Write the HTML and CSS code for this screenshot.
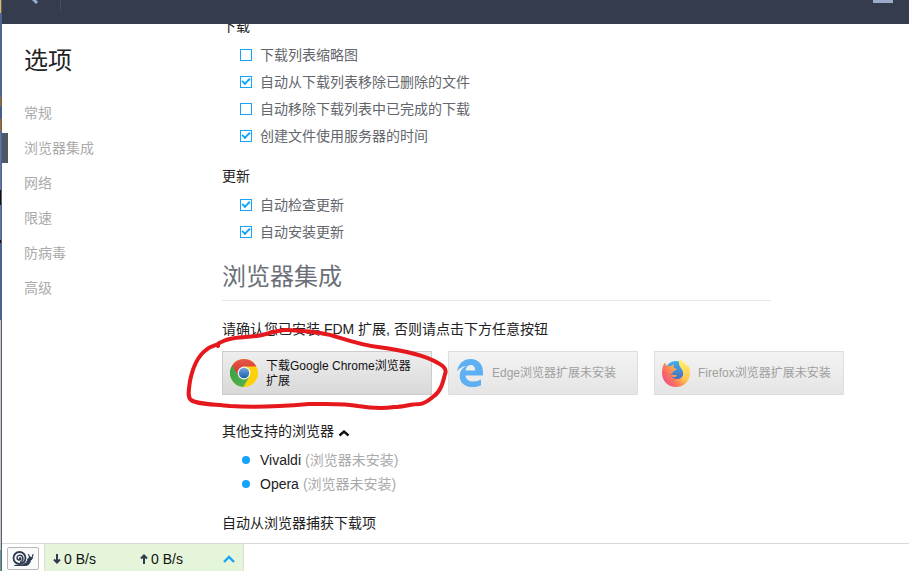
FILE: index.html
```html
<!DOCTYPE html>
<html lang="zh-CN">
<head>
<meta charset="utf-8">
<title>选项</title>
<link rel="stylesheet" href="styles.css">
</head>
<body>
<div class="desktop-edge"></div>
<div class="window">
  <header class="topbar">
    <button class="back" aria-label="返回"><svg width="12" height="8" viewBox="0 0 12 8"><path d="M1-5 5-1 9 3" fill="none" stroke="#9aaccb" stroke-width="3"/></svg></button>
    <button class="menu" aria-label="菜单"></button>
  </header>
  <div class="body">
    <aside class="sidebar">
      <h1>选项</h1>
      <nav>
        <a href="#general">常规</a>
        <a href="#browser" class="active">浏览器集成</a>
        <a href="#network">网络</a>
        <a href="#limits">限速</a>
        <a href="#antivirus">防病毒</a>
        <a href="#advanced">高级</a>
      </nav>
    </aside>
    <main class="content">
      <section class="group">
        <h3>下载</h3>
        <label class="option"><input type="checkbox">下载列表缩略图</label>
        <label class="option"><input type="checkbox" checked>自动从下载列表移除已删除的文件</label>
        <label class="option"><input type="checkbox">自动移除下载列表中已完成的下载</label>
        <label class="option"><input type="checkbox" checked>创建文件使用服务器的时间</label>
      </section>
      <section class="group">
        <h3>更新</h3>
        <label class="option"><input type="checkbox" checked>自动检查更新</label>
        <label class="option"><input type="checkbox" checked>自动安装更新</label>
      </section>
      <section id="browser">
        <h2>浏览器集成</h2>
        <p class="hint">请确认您已安装 FDM 扩展, 否则请点击下方任意按钮</p>
        <div class="browsers">
          <div class="marked">
            <button class="browser chrome">
              <svg width="28" height="28" viewBox="0 0 28 28">
                <defs>
                  <linearGradient id="cr" x2="0" y2="1"><stop stop-color="#e8584b"/><stop offset="1" stop-color="#c83228"/></linearGradient>
                  <linearGradient id="cg" x2="1" y2="1"><stop stop-color="#3a9d4a"/><stop offset="1" stop-color="#55b54c"/></linearGradient>
                  <linearGradient id="cb" x2="0" y2="1"><stop stop-color="#72a9dc"/><stop offset="1" stop-color="#1d5fa8"/></linearGradient>
                </defs>
                <circle cx="14" cy="14" r="14" fill="#fdd20a"/>
                <path d="M14 14 8.400 17.200 1.900 7A14 14 0 0 1 26.400 7.600H14Z" fill="url(#cr)"/>
                <path d="M2.300 6.300 8.400 17.200 14 20.500 19.600 17.200 13.300 28A14 14 0 0 1 2.300 6.300Z" fill="url(#cg)"/>
                <circle cx="14" cy="14" r="6.400" fill="#f4f5f6"/>
                <circle cx="14" cy="14" r="5.200" fill="url(#cb)"/>
              </svg>
              <span>下载Google Chrome浏览器扩展</span>
            </button>
            <svg class="marker" width="270" height="90" viewBox="182 324 270 90" aria-hidden="true">
              <path d="M218 346C217 343 221 342 226 340C238 336 250 338 262 335C272 333 279 329 288 330C308 331 320 332 334 336C350 341 362 345 378 347C400 350 425 355 438 363C444 366 447 370 445 374C443 382 441 391 434 396C429 400 426 403 420 404C410 404 404 407 394 407C382 409 370 408 358 406C344 403 325 404 309 404C286 406 255 408 230 406C215 404 198 405 191 400C187 397 189 389 190 381C193 366 198 356 206 350C210 346 214 346 218 344"/>
            </svg>
          </div>
          <button class="browser" disabled>
            <svg width="28" height="28" viewBox="0 0 28 28"><path d="M1 12.500C2.200 4.800 7.500 0 14.500 0C22.500 0 27 5.600 27 13V16.500H9.500C9.800 20.400 13.200 22.600 17.600 22.600C20.300 22.600 22.700 21.800 25 20.600V26.200C22.600 27.500 19.700 28 16.400 28C8.700 28 3.700 23.600 3.700 16.900C3.700 12.500 6.200 8.800 10.400 7C6.500 7.400 3.200 9.300 1 12.500ZM9.600 11.400H19.200C19.200 8 17.600 6 14.700 6C12 6 10 8.200 9.600 11.400Z" fill="#5eb0f2"/></svg>
            <span>Edge浏览器扩展未安装</span>
          </button>
          <button class="browser" disabled>
            <svg width="28" height="28" viewBox="0 0 28 28">
              <defs>
                <linearGradient id="fo" x1=".9" x2=".1" y1=".3" y2=".8"><stop stop-color="#ffe25f"/><stop offset=".4" stop-color="#ffa94f"/><stop offset=".75" stop-color="#fb6b62"/><stop offset="1" stop-color="#ee5489"/></linearGradient>
                <linearGradient id="fy" x2="0" y2="1"><stop stop-color="#fff36b"/><stop offset="1" stop-color="#ffc04f"/></linearGradient>
                <linearGradient id="fb" x2="0" y2="1"><stop stop-color="#3fb0f0"/><stop offset="1" stop-color="#4a5fb4"/></linearGradient>
              </defs>
              <circle cx="14" cy="13" r="11" fill="url(#fb)"/>
              <path d="M3 3.500 5 7.500C6.500 6.500 8 6.500 9 7L12 5C11.500 6.500 11.500 8 12 9L14.500 10C14.500 11.500 12 11.500 11 12.500C11.500 14 9.500 14.500 8.500 15.500C9.500 18 12 20.500 16 20C20 19.500 22 16 21.500 12L27 7.500C28 10 28 12 28 14C28 22 22 28 14 28S0 22 0 14C0 9.500 1 6 3 3.500Z" fill="url(#fo)"/>
              <path d="M18 0C20 3 23.500 3.500 24.500 7L25.500 5.500C27.500 8.500 28 12 27.500 16C26 21 22 23 18 22.500C22 19 22.500 13 18.500 8.500C16.500 6 16.500 2.500 18 0Z" fill="url(#fy)"/>
              <path d="M8.500 15.500C11 17 12.500 15 15 16.500C14 18.500 10.500 19 8.500 15.500Z" fill="#ff9a4d"/>
            </svg>
            <span>Firefox浏览器扩展未安装</span>
          </button>
        </div>
        <button class="toggle" aria-expanded="true">其他支持的浏览器
          <svg width="12" height="8" viewBox="0 0 12 8"><path d="M1.500 6.500 6 2.500 10.500 6.500" fill="none" stroke="#111" stroke-width="2.400"/></svg>
        </button>
        <ul class="others">
          <li>Vivaldi <span>(浏览器未安装)</span></li>
          <li>Opera <span>(浏览器未安装)</span></li>
        </ul>
        <h3>自动从浏览器捕获下载项</h3>
      </section>
    </main>
  </div>
  <footer class="status">
    <button class="snail" aria-label="限速模式">
      <svg width="22" height="16" viewBox="0 0 22 16" fill="none" stroke="#2f3a4f" stroke-linecap="round" stroke-linejoin="round">
        <path d="M3 14.500H13.500C16.500 14.500 18 12 18.500 9.500L20.500 7.500 18.500 6 16 7.500C15.500 11 14 12 12 13Z" fill="#2f3a4f" stroke-width="1"/>
        <circle cx="7.500" cy="7" r="7" fill="#fafafa" stroke="none"/>
        <circle cx="7.500" cy="7" r="6" stroke-width="1.800"/>
        <path d="M7.500 7.500C8 6.500 9 7 8.800 8.200C8 9.700 5 9.200 5 6.700C5.200 4.200 8.500 3.500 10.200 5.300C11.800 7.500 10.800 10.300 8.500 11.200" stroke-width="1.500"/>
        <path d="M18 7 16.500 3.500M20 7 21 3.500" stroke-width="1.100"/>
      </svg>
    </button>
    <div class="speeds">
      <span class="speed"><svg width="8" height="10" viewBox="0 0 8 10"><path d="M4 0V8M1 5.500 4 8.500 7 5.500" fill="none" stroke="#2f3a4f" stroke-width="2"/></svg>0 B/s</span>
      <span class="speed"><svg width="8" height="10" viewBox="0 0 8 10"><path d="M4 10V2M1 4.500 4 1.500 7 4.500" fill="none" stroke="#2f3a4f" stroke-width="2"/></svg>0 B/s</span>
      <button class="expand" aria-label="展开"><svg width="12" height="8" viewBox="0 0 12 8"><path d="M1 7 6 2 11 7" fill="none" stroke="#16a4fa" stroke-width="2.400"/></svg></button>
    </div>
  </footer>
</div>
</body>
</html>
```
FILE: styles.css
```css
* { box-sizing: border-box; }

body {
  margin: 0;
  height: 100vh;
  display: flex;
  overflow: hidden;
  background: #fff;
  color: #222;
  font: 14px/20px "Liberation Sans", "Noto Sans CJK SC", sans-serif;
}

button {
  margin: 0;
  padding: 0;
  border: 0;
  background: none;
  color: inherit;
  font: inherit;
}

svg { display: block; flex: none; }
h1, h2, h3, p, ul { margin: 0; padding: 0; font-weight: 400; }

.desktop-edge {
  width: 2px;
  flex: none;
  border-right: 1px solid #59616e;
  background: linear-gradient(#e0b65c 0 13px, #4468b8 13px 97px, #a86a20 97px 106px, #3c5ca8 106px 119px, #b06a20 119px 131px, #5577c4 131px 190px, #111 190px 205px, #5577c4 205px 240px, #111 240px 243px, #3c62b8 243px 320px, #c6c6c6 320px 550px, #6898a0 550px);
}

.window {
  flex: 1;
  min-width: 0;
  display: flex;
  flex-direction: column;
}

.topbar {
  height: 24px;
  flex: none;
  display: flex;
  justify-content: space-between;
  align-items: flex-start;
  padding-right: 16px;
  background: #343c4e;
}

.back {
  width: 59px;
  height: 11px;
  padding-left: 26px;
  border-right: 1px solid #424e62;
}

.back svg { height: 8px; margin-bottom: 3px; }
.menu { width: 20px; height: 3px; background: #9aaac8; }

.body {
  flex: 1;
  min-height: 0;
  display: flex;
}

.sidebar { width: 180px; flex: none; padding-top: 21px; }

.sidebar h1 {
  padding-left: 22px;
  font-size: 24px;
  line-height: 32px;
  margin-bottom: 21px;
}

.sidebar a {
  display: block;
  margin-bottom: 5px;
  padding-left: 22px;
  color: #aaa;
  line-height: 30px;
  text-decoration: none;
}

.sidebar .active { padding-left: 16px; border-left: 6px solid #505864; }

.content {
  flex: 1;
  min-width: 0;
  padding-left: 40px;
  overflow: hidden;
}

.group { margin-bottom: 16px; }
.group:first-child { margin: -8px 0 17px; }
.group h3 { margin-bottom: 5px; }
h3 { font-size: 14px; line-height: 20px; }

.option {
  display: flex;
  align-items: center;
  gap: 8px;
  height: 27px;
  padding-left: 18px;
  color: #63666c;
}

.option input {
  appearance: none;
  width: 12px;
  height: 12px;
  margin: 0;
  border: 1px solid #16a4fa;
  display: grid;
  place-items: center;
}

.option input:checked::before {
  content: "";
  box-sizing: border-box;
  width: 8px;
  height: 5px;
  margin-bottom: 2px;
  border: solid #16a4fa;
  border-width: 0 0 2px 2px;
  transform: rotate(-45deg);
}

h2 {
  max-width: 549px;
  padding-bottom: 7px;
  border-bottom: 1px solid #e8e8e8;
  color: #6b7078;
  font-size: 24px;
  line-height: 32px;
}

.hint { margin: 18px 0 12px; }

.browsers { display: flex; gap: 16px; }
.marked { position: relative; }

.browser {
  display: flex;
  align-items: center;
  gap: 8px;
  width: 190px;
  height: 44px;
  padding: 0 7px;
  border: 1px solid #dedede;
  background: linear-gradient(#f3f3f3, #e5e5e5);
  color: #a0a0a0;
  font-size: 12px;
  line-height: 15px;
  text-align: left;
}

.browser span { padding-top: 1px; }

.chrome {
  width: 210px;
  padding-right: 12px;
  border-color: #ccc;
  background: linear-gradient(#eee, #d9d9d9);
  color: #111;
}

.marker {
  position: absolute;
  left: -40px;
  top: -27px;
  fill: none;
  stroke: #e5191d;
  stroke-width: 4;
  stroke-linecap: round;
  stroke-linejoin: round;
  pointer-events: none;
}

.toggle {
  display: flex;
  align-items: center;
  gap: 4px;
  margin: 26px 0 7px;
}

.toggle svg { margin-top: 4px; }

.others { list-style: none; margin-bottom: 17px; }

.others li {
  display: flex;
  align-items: center;
  gap: 4px;
  line-height: 24px;
  padding-left: 20px;
}

.others li::before {
  content: "";
  width: 8px;
  height: 8px;
  margin-right: 6px;
  border-radius: 50%;
  background: #16a4fa;
}

.others span { color: #aaa; }

.status {
  height: 28px;
  flex: none;
  display: flex;
  align-items: flex-end;
  border-top: 1px solid #d9d9d9;
}

.snail {
  width: 32px;
  height: 23px;
  margin: 0 5px 1px;
  display: grid;
  place-items: center;
  border: 1px solid #b8b8b8;
  border-radius: 2px;
  background: #fafafa;
}

.speeds {
  display: flex;
  align-items: center;
  width: 200px;
  height: 27px;
  padding: 3px 8px 0;
  border: solid #d9dfd5;
  border-width: 0 1px;
  background: #e4f5da;
  color: #111;
}

.speed { display: flex; align-items: center; gap: 3px; width: 87px; flex: none; }
.speed + .speed { width: 83px; }
```
